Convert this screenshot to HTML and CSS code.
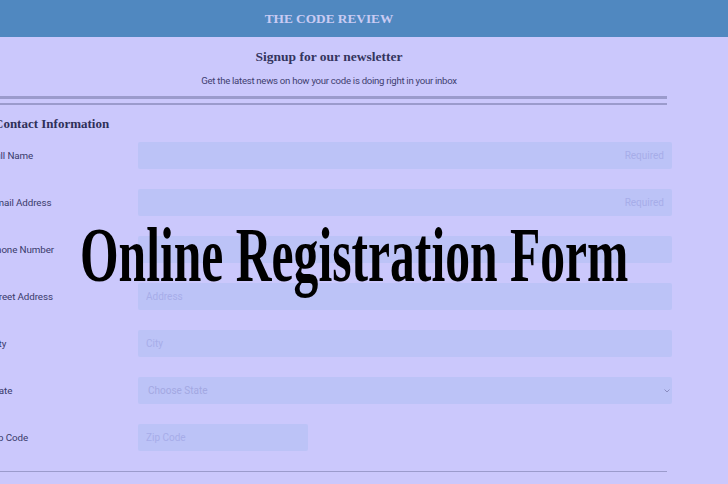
FILE: index.html
```html
<!DOCTYPE html>
<html lang="en">
<head>
<meta charset="utf-8">
<title>Online Registration Form</title>
<link rel="stylesheet" href="styles.css">
</head>
<body>
<header class="topbar">
  <div class="wrap"><h1 class="brand">THE CODE REVIEW</h1></div>
</header>
<main class="wrap">
  <section class="intro">
    <h2 class="intro-title">Signup for our newsletter</h2>
    <p class="intro-text">Get the latest news on how your code is doing right in your inbox</p>
  </section>
  <div class="rule-double"></div>
  <form class="form">
    <h3 class="form-title">Contact Information</h3>
    <div class="row"><label class="label">Full Name</label><input class="field field-req" placeholder="Required"></div>
    <div class="row"><label class="label">Email Address</label><input class="field field-req" placeholder="Required"></div>
    <div class="row"><label class="label">Phone Number</label><input class="field" placeholder=""></div>
    <div class="row"><label class="label">Street Address</label><input class="field" placeholder="Address"></div>
    <div class="row"><label class="label">City</label><input class="field" placeholder="City"></div>
    <div class="row"><label class="label">State</label>
      <div class="select">Choose State
        <svg class="chev" width="6" height="4" viewBox="0 0 6 4"><path d="M0.5 0.5 L3 3 L5.5 0.5" fill="none" stroke="#8a8cc0" stroke-width="1"/></svg>
      </div>
    </div>
    <div class="row"><label class="label">Zip Code</label><input class="field field-zip" placeholder="Zip Code"></div>
  </form>
  <div class="rule-single"></div>
</main>
<div class="banner">Online Registration Form</div>
</body>
</html>
```
FILE: styles.css
```css
html, body {
  margin: 0;
  padding: 0;
}
body {
  background: #cbc8fc;
  width: 728px;
  height: 484px;
  overflow: hidden;
  position: relative;
  font-family: Roboto, "Liberation Sans", sans-serif;
}
.wrap {
  margin-left: -9px;
  width: 676px;
}
.topbar {
  background: #5088c0;
  height: 37px;
  display: flex;
  align-items: center;
}
.brand {
  margin: 0;
  text-align: center;
  font-family: "Liberation Serif", serif;
  font-weight: bold;
  font-size: 13.3px;
  color: #c9cbf3;
  line-height: 16px;
}
.intro {
  padding-top: 12px;
  text-align: center;
}
.intro-title {
  margin: 0;
  font-family: "Liberation Serif", serif;
  font-weight: bold;
  font-size: 13.5px;
  line-height: 16px;
  color: #34355e;
}
.intro-text {
  margin: 10px 0 0;
  font-size: 9.6px;
  letter-spacing: -0.28px;
  line-height: 12px;
  color: #3f4070;
}
.rule-double {
  margin-top: 9px;
  height: 4px;
  border-top: 3px solid #9b9bcc;
  border-bottom: 2px solid #9b9bcc;
}
.form {
  margin: 11px 0 0;
  display: flex;
  flex-direction: column;
  gap: 20px;
}
.form-title {
  margin: 0 0 -10px 3px;
  font-family: "Liberation Serif", serif;
  font-weight: bold;
  font-size: 13px;
  line-height: 16px;
  color: #2f3059;
}
.row {
  display: flex;
  align-items: center;
  height: 27px;
  margin-right: -5px;
}
.label {
  width: 148px;
  margin-left: -1px;
  flex: none;
  font-size: 9.8px;
  letter-spacing: -0.1px;
  color: #393a6b;
}
.field, .select {
  flex: 1;
  height: 27px;
  box-sizing: border-box;
  border: none;
  border-radius: 2px;
  background: #bcc3f7;
  padding: 0 8px;
  font-family: Roboto, "Liberation Sans", sans-serif;
  font-size: 10px;
  color: #3a3b6a;
  outline: none;
}
.field::placeholder {
  color: #a7ade9;
}
.field-req {
  text-align: right;
}
.field-zip {
  flex: none;
  width: 170px;
}
.select {
  display: flex;
  align-items: center;
  justify-content: space-between;
  padding: 0 2px 0 10px;
  color: #a3a8e2;
}
.chev {
  display: block;
}
.rule-single {
  margin-top: 20px;
  height: 0;
  border-top: 1.5px solid #9b9bcc;
}
.banner {
  position: absolute;
  left: 80px;
  top: 210px;
  font-family: "Liberation Serif", serif;
  font-weight: bold;
  font-size: 79px;
  line-height: 90px;
  color: #000;
  white-space: nowrap;
  transform: scaleX(0.628);
  transform-origin: left top;
}
```
